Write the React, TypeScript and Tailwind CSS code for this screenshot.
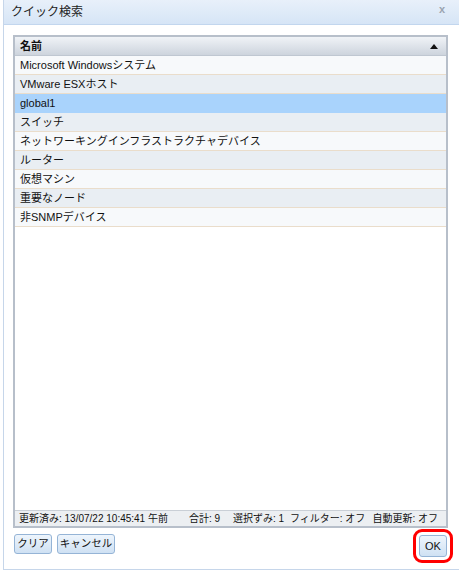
import React from 'react';

const rows = [
  'Microsoft Windowsシステム',
  'VMware ESXホスト',
  'global1',
  'スイッチ',
  'ネットワーキングインフラストラクチャデバイス',
  'ルーター',
  '仮想マシン',
  '重要なノード',
  '非SNMPデバイス',
];

const font = { fontFamily: '"Liberation Sans", "Noto Sans CJK JP", sans-serif' };

export default function App() {
  return (
    <div className="w-[459px] h-[573px] bg-white text-[11px] text-[#111]" style={font}>
      <div className="h-[570px] border-l border-b border-[#c6d6ea] ml-[3px] flex flex-col">
        {/* Title bar */}
        <div className="h-[25px] flex items-center justify-between bg-gradient-to-b from-[#e8f0fa] to-[#d6e5f6] border-b border-[#c2d6ee] pl-[7px] pr-[14px]">
          <span className="text-[12px] text-[#222]">クイック検索</span>
          <span className="text-[11px] font-bold text-[#9aa4b0] -mt-[6px]">x</span>
        </div>

        <div className="w-[444px] flex flex-col pl-[9px] pt-[10px]">
          {/* Grid */}
          <div className="h-[493px] border-2 border-[#b7bfca] flex flex-col bg-white">
            <div className="h-[19px] flex items-center justify-between bg-gradient-to-b from-[#f0f3f7] to-[#cdd4dd] border-b border-[#bfc7d1] pl-[5px] pr-[8px]">
              <span className="font-bold text-[11px]">名前</span>
              <svg width="8" height="5" viewBox="0 0 8 5">
                <polygon points="4,0 8,5 0,5" fill="#111" />
              </svg>
            </div>
            <div className="flex-1 flex flex-col">
              {rows.map((r, i) => (
                <div
                  key={r}
                  className={`h-[19px] flex items-center pl-[5px] border-b ${
                    i === 2
                      ? 'bg-[#a9d3fc] border-[#a9d3fc]'
                      : i % 2 === 0
                      ? 'bg-[#f7f9fb] border-[#eaddcb]'
                      : 'bg-[#e9eef3] border-[#eaddcb]'
                  }`}
                >
                  {r}
                </div>
              ))}
            </div>
            <div className="h-[16px] flex items-center whitespace-nowrap bg-[#eceff2] border-t border-[#c9cfd6] pl-[4px] pr-[8px] text-[10px]">
              <span className="w-[170px] shrink-0">更新済み: 13/07/22 10:45:41 午前</span>
              <span className="w-[44px] shrink-0">合計: 9</span>
              <span className="w-[57px] shrink-0">選択ずみ: 1</span>
              <span className="flex-1">フィルター: オフ</span>
              <span>自動更新: オフ</span>
            </div>
          </div>

          {/* Buttons */}
          <div className="flex items-start justify-between mt-[6px]">
            <div className="flex gap-[5px] pl-[1px]">
              <button className="h-[20px] w-[38px] rounded-[3px] border border-[#95b4d6] bg-gradient-to-b from-[#eef5fc] to-[#cfe1f3] text-[10.5px]">
                クリア
              </button>
              <button className="h-[20px] w-[58px] rounded-[3px] border border-[#95b4d6] bg-gradient-to-b from-[#eef5fc] to-[#cfe1f3] text-[10.5px]">
                キャンセル
              </button>
            </div>
            <div className="-mt-[5px] mr-[-5px] p-[3px] rounded-[9px] border-[3px] border-[#ff0000]">
              <button className="h-[22px] w-[28px] rounded-[3px] border border-[#95b4d6] bg-gradient-to-b from-[#eef5fc] to-[#cfe1f3] text-[11px]">
                OK
              </button>
            </div>
          </div>
        </div>
      </div>
    </div>
  );
}
